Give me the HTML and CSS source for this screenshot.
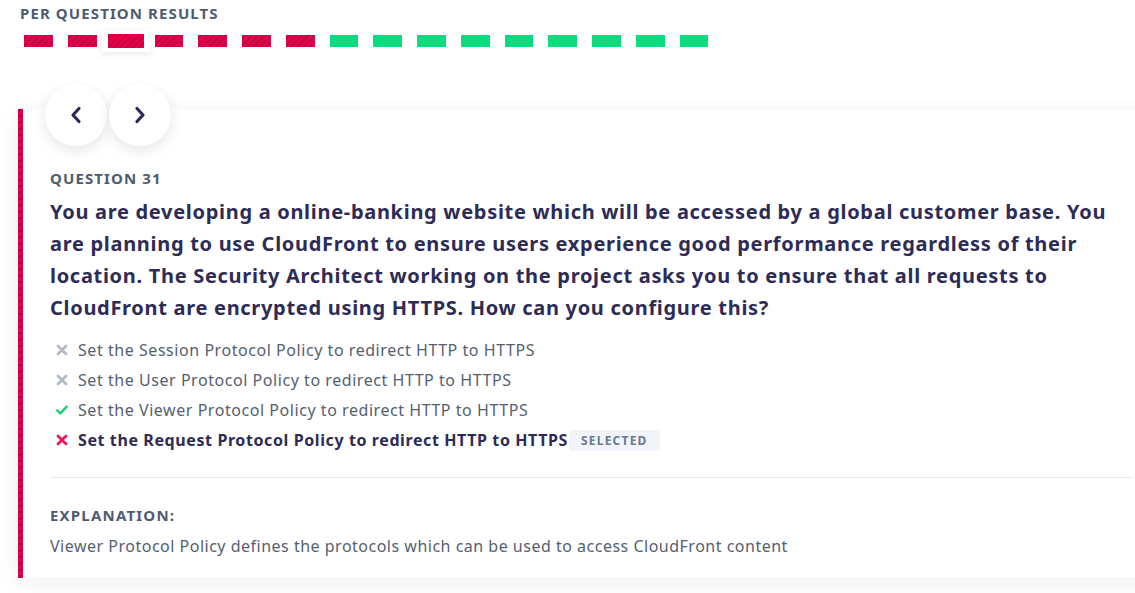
FILE: index.html
```html
<!DOCTYPE html>
<html lang="en">
<head>
<meta charset="utf-8">
<title>Per question results</title>
<link rel="stylesheet" href="styles.css">
</head>
<body>
<section class="results">
  <h2 class="results-title">PER QUESTION RESULTS</h2>
  <div class="bars">
    <span class="bar wrong"></span>
    <span class="bar wrong"></span>
    <span class="bar-current"><span class="bar wrong big"></span></span>
    <span class="bar wrong"></span>
    <span class="bar wrong"></span>
    <span class="bar wrong"></span>
    <span class="bar wrong"></span>
    <span class="bar right"></span>
    <span class="bar right"></span>
    <span class="bar right"></span>
    <span class="bar right"></span>
    <span class="bar right"></span>
    <span class="bar right"></span>
    <span class="bar right"></span>
    <span class="bar right"></span>
    <span class="bar right"></span>
  </div>
</section>

<article class="card">
  <div class="nav">
    <button class="nav-btn" aria-label="Previous">
      <svg width="14" height="18" viewBox="0 0 14 18"><path d="M10 2.5 L4 9 L10 15.5" fill="none" stroke="#2d2b55" stroke-width="3.2" stroke-linecap="round" stroke-linejoin="round"/></svg>
    </button>
    <button class="nav-btn" aria-label="Next">
      <svg width="14" height="18" viewBox="0 0 14 18"><path d="M4 2.5 L10 9 L4 15.5" fill="none" stroke="#2d2b55" stroke-width="3.2" stroke-linecap="round" stroke-linejoin="round"/></svg>
    </button>
  </div>

  <div class="label">QUESTION 31</div>
  <h1 class="question">You are developing a online-banking website which will be accessed by a global customer base. You<br>are planning to use CloudFront to ensure users experience good performance regardless of their<br>location. The Security Architect working on the project asks you to ensure that all requests to<br>CloudFront are encrypted using HTTPS. How can you configure this?</h1>

  <ul class="answers">
    <li class="answer">
      <svg class="icon" width="12" height="12" viewBox="0 0 12 12"><path d="M2 2 L10 10 M10 2 L2 10" stroke="#b3bac6" stroke-width="2.8" stroke-linecap="round"/></svg>
      <span>Set the Session Protocol Policy to redirect HTTP to HTTPS</span>
    </li>
    <li class="answer">
      <svg class="icon" width="12" height="12" viewBox="0 0 12 12"><path d="M2 2 L10 10 M10 2 L2 10" stroke="#b3bac6" stroke-width="2.8" stroke-linecap="round"/></svg>
      <span>Set the User Protocol Policy to redirect HTTP to HTTPS</span>
    </li>
    <li class="answer">
      <svg class="icon" width="12" height="12" viewBox="0 0 14 12"><path d="M1.5 6.5 L5 10 L12.5 2" fill="none" stroke="#14d27c" stroke-width="2.8" stroke-linecap="round" stroke-linejoin="round"/></svg>
      <span>Set the Viewer Protocol Policy to redirect HTTP to HTTPS</span>
    </li>
    <li class="answer selected">
      <svg class="icon" width="12" height="12" viewBox="0 0 12 12"><path d="M2 2 L10 10 M10 2 L2 10" stroke="#f5135b" stroke-width="2.8" stroke-linecap="round"/></svg>
      <span>Set the Request Protocol Policy to redirect HTTP to HTTPS</span><span class="badge">SELECTED</span>
    </li>
  </ul>

  <div class="explanation">
    <div class="label label-expl">EXPLANATION:</div>
    <p class="expl-text">Viewer Protocol Policy defines the protocols which can be used to access CloudFront content</p>
  </div>
</article>
</body>
</html>
```

FILE: styles.css
```css
html, body {
  margin: 0;
  padding: 0;
  background: #ffffff;
  overflow: hidden;
}

body {
  font-family: "Noto Sans", "Open Sans", "DejaVu Sans", sans-serif;
  color: #4f5b6e;
  width: 1135px;
  height: 593px;
}

.results {
  padding: 4px 0 0 20px;
}

.results-title {
  margin: 0;
  font-size: 15px;
  line-height: 19px;
  font-weight: 700;
  letter-spacing: 1.1px;
  color: #4f5b6e;
}

.bars {
  display: flex;
  align-items: center;
  gap: 15px;
  margin: 6px 0 0 4px;
  height: 24px;
}

.bar {
  display: block;
  width: 28.75px;
  height: 12px;
  flex: none;
}

.bar.big {
  width: 36px;
  height: 14px;
}

.bar.wrong {
  background: repeating-linear-gradient(-45deg, #e6004a 0 3px, #bf0040 3px 4.5px);
}

.bar.right {
  background: #0bdd7f;
}

.bar-current {
  display: block;
  flex: none;
  margin: 0 -10px;
  padding: 4px 6px;
  background: #fff;
  box-shadow: 0 2px 8px rgba(40, 40, 80, 0.10);
}

.card {
  position: relative;
  margin: 56px -25px 0 18px;
  padding: 59px 27px 19px 27px;
  background: #fff;
  border-left: 5px solid #d80045;
  border-image: repeating-linear-gradient(-45deg, #e6004a 0 3px, #b9003e 3px 4.5px) 1;
  box-shadow: 0 4px 22px rgba(40, 40, 70, 0.07);
}

.nav {
  position: absolute;
  top: -25px;
  left: 22px;
  display: flex;
  gap: 2px;
}

.nav-btn {
  width: 62px;
  height: 62px;
  border-radius: 50%;
  border: none;
  background: #fff;
  box-shadow: 0 5px 14px rgba(40, 40, 90, 0.10);
  display: flex;
  align-items: center;
  justify-content: center;
  padding: 0;
  cursor: pointer;
}

.label {
  font-size: 15px;
  line-height: 20px;
  font-weight: 700;
  letter-spacing: 1.1px;
  color: #4f5b6e;
}

.question {
  margin: 8px 0 0 0;
  font-size: 20px;
  line-height: 32px;
  font-weight: 700;
  letter-spacing: 0.7px;
  color: #2e2c55;
  white-space: nowrap;
}

.answers {
  list-style: none;
  margin: 11px 0 0 0;
  padding: 0 0 0 6px;
}

.answer {
  display: flex;
  align-items: center;
  height: 30px;
  font-size: 16px;
  letter-spacing: 0.55px;
  color: #555f70;
}

.answer .icon {
  flex: none;
  margin-right: 10px;
}

.answer.selected {
  font-weight: 700;
  letter-spacing: 0.6px;
  color: #2e2c55;
}

.badge {
  display: inline-block;
  margin-left: 1px;
  padding: 0 12px;
  height: 21px;
  line-height: 21px;
  border-radius: 4px;
  background: #f1f5f9;
  color: #6b7890;
  font-size: 12px;
  font-weight: 700;
  letter-spacing: 1.2px;
}

.explanation {
  margin-top: 22px;
  border-top: 1px solid #e9e9ec;
  padding-top: 26px;
}

.label-expl {
  font-size: 15px;
  line-height: 22px;
  letter-spacing: 1.2px;
}

.expl-text {
  margin: 7px 0 0 0;
  font-size: 16px;
  line-height: 26px;
  letter-spacing: 0.5px;
  color: #555f70;
}
```
